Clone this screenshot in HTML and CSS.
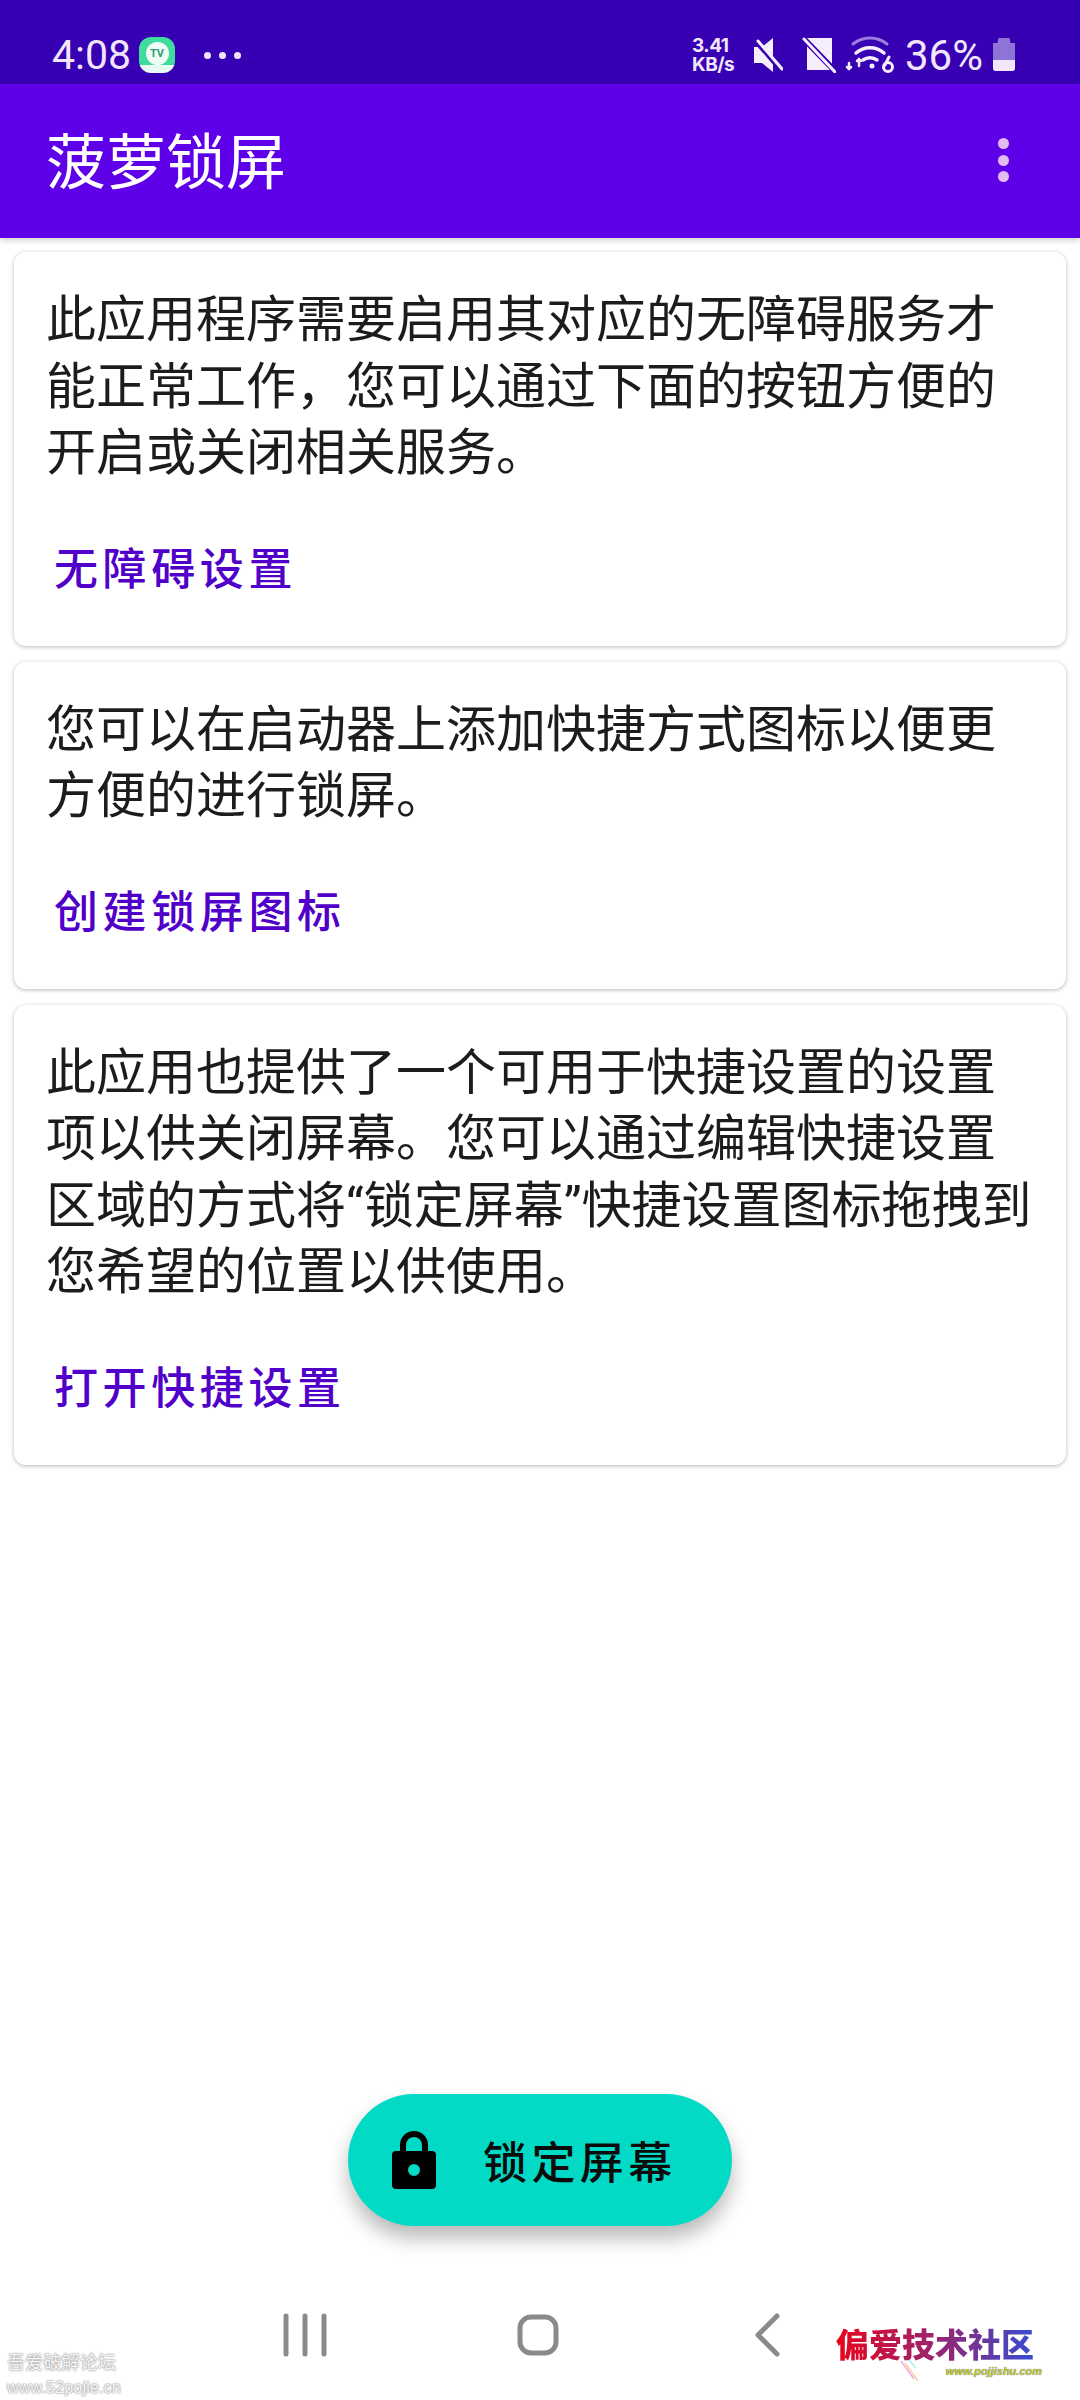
FILE: index.html
```html
<!DOCTYPE html>
<html lang="zh-CN">
<head>
  <meta charset="UTF-8">
  <meta name="viewport" content="width=device-width, initial-scale=1.0">
  <title>菠萝锁屏</title>
  <link rel="stylesheet" href="styles.css">
</head>
<body>
  <div class="page">
    <div class="status-bar">
      <div class="status-left">
        <span class="clock">4:08</span>
        <span class="tv-icon"><span class="tv-disc">TV</span></span>
        <span class="status-dots"><i></i><i></i><i></i></span>
      </div>
      <div class="status-right">
        <span class="net-speed">3.41<br>KB/s</span>
        <svg class="ico-mute" width="30" height="36" viewBox="0 0 30 36">
          <path fill="#f6eefc" d="M1 10h8l11-9v34L9 26H1z"/>
          <path stroke="#3700b3" stroke-width="5" d="M2 3l27 31"/>
          <path stroke="#f6eefc" stroke-width="3" stroke-linecap="round" d="M5 4l24 28"/>
        </svg>
        <svg class="ico-sim" width="34" height="36" viewBox="0 0 34 36">
          <path fill="#f6eefc" d="M5 1h25v32H5z"/>
          <path stroke="#3700b3" stroke-width="6" d="M0 0l34 35"/>
          <path stroke="#f6eefc" stroke-width="3" stroke-linecap="round" d="M2 2l31 33"/>
        </svg>
        <svg class="ico-wifi" width="50" height="38" viewBox="0 0 50 38" fill="none" stroke-linecap="round">
          <path stroke="#9a7fe0" stroke-width="3" d="M8 8c10-8 24-8 34 0"/>
          <path stroke="#f6eefc" stroke-width="3.5" d="M11 17c8-7 20-7 28 0"/>
          <path stroke="#f6eefc" stroke-width="3.5" d="M18 24c4-3 10-3 14 0"/>
          <circle cx="27" cy="30" r="2.5" fill="#f6eefc"/>
          <path stroke="#f6eefc" stroke-width="2.5" d="M4 33v-6M14 30v-7M2 31l2 2 2-2M12 25l2-2 2 2"/>
          <circle cx="43" cy="31" r="4.5" stroke="#f6eefc" stroke-width="3"/>
          <path stroke="#f6eefc" stroke-width="3" d="M40 29l4-8"/>
        </svg>
        <span class="battery-text">36%</span>
        <span class="battery"><span class="battery-level"></span></span>
      </div>
    </div>

    <header class="app-bar">
      <h1>菠萝锁屏</h1>
      <span class="menu-dots"><i></i><i></i><i></i></span>
    </header>

    <main class="cards">
      <section class="card">
        <p>此应用程序需要启用其对应的无障碍服务才<br>能正常工作，您可以通过下面的按钮方便的<br>开启或关闭相关服务。</p>
        <a class="card-action">无障碍设置</a>
      </section>
      <section class="card">
        <p>您可以在启动器上添加快捷方式图标以便更<br>方便的进行锁屏。</p>
        <a class="card-action">创建锁屏图标</a>
      </section>
      <section class="card">
        <p>此应用也提供了一个可用于快捷设置的设置<br>项以供关闭屏幕。您可以通过编辑快捷设置<br>区域的方式将<span class="quote">“</span>锁定屏幕<span class="quote">”</span>快捷设置图标拖拽到<br>您希望的位置以供使用。</p>
        <a class="card-action">打开快捷设置</a>
      </section>
    </main>

    <div class="fab-row">
      <button class="fab">
        <svg width="44" height="58" viewBox="0 0 44 58">
          <path fill="#000" fill-rule="evenodd" d="M4 20h4v-6a14 14 0 0 1 28 0v6h4a4 4 0 0 1 4 4v30a4 4 0 0 1-4 4H4a4 4 0 0 1-4-4V24a4 4 0 0 1 4-4zM14 20h16v-6a8 8 0 0 0-16 0zM22 33a6 6 0 1 0 0 12 6 6 0 0 0 0-12z"/>
        </svg>
        <span>锁定屏幕</span>
      </button>
    </div>

    <nav class="nav-bar">
      <svg class="nav-recent" width="46" height="44" viewBox="0 0 46 44">
        <path stroke="#8a8a8a" stroke-width="5" stroke-linecap="round" d="M4 3v38M23 3v38M42 3v38"/>
      </svg>
      <svg class="nav-home" width="42" height="44" viewBox="0 0 42 44">
        <rect x="3" y="4" width="36" height="36" rx="11" fill="none" stroke="#8a8a8a" stroke-width="5"/>
      </svg>
      <svg class="nav-back" width="26" height="44" viewBox="0 0 26 44">
        <path fill="none" stroke="#8a8a8a" stroke-width="5" stroke-linecap="round" stroke-linejoin="round" d="M23 3L4 22l19 19"/>
      </svg>
    </nav>

    <div class="mark-left">吾爱破解论坛<br><span>www.52pojie.cn</span></div>
    <div class="mark-right">
      <div class="mark-title">偏爱技术社区</div>
      <div class="mark-url">www.pojjishu.com</div>
      <svg class="mark-streak" width="20" height="22" viewBox="0 0 20 22" fill="none" stroke-width="1.5">
        <path stroke="#f4a8e0" d="M1 1l13 18"/>
        <path stroke="#f6d0a8" d="M5 3l13 18"/>
        <path stroke="#a8f0f0" d="M9 0l7 8"/>
      </svg>
    </div>
  </div>
</body>
</html>
```

FILE: styles.css
```css
* {
  box-sizing: border-box;
}

body {
  margin: 0;
  background: #fff;
  font-family: "Noto Sans CJK SC", "Noto Sans", sans-serif;
}

.page {
  position: relative;
  width: 1080px;
  height: 2400px;
  display: flex;
  flex-direction: column;
  background: #fff;
  overflow: hidden;
}

/* status bar */
.status-bar {
  height: 84px;
  flex: none;
  padding: 26px 65px 0 52px;
  background: #3700b3;
  color: #f1e6fb;
  display: flex;
  justify-content: space-between;
  align-items: center;
}

.status-left,
.status-right {
  display: flex;
  align-items: center;
}

.clock {
  font-family: Roboto, sans-serif;
  font-size: 41px;
  width: 87px;
}

.tv-icon {
  width: 36px;
  height: 36px;
  border-radius: 12px;
  background: linear-gradient(#3fdc9d 78%, #e8fbf2 78%);
  display: flex;
  justify-content: center;
  padding-top: 5px;
}

.tv-disc {
  width: 23px;
  height: 23px;
  border-radius: 50%;
  background: #effbf5;
  color: #2f9d72;
  font: 700 11px/23px Roboto, sans-serif;
  text-align: center;
}

.status-dots {
  display: flex;
  gap: 8px;
  margin-left: 29px;
}

.status-dots i {
  width: 7px;
  height: 7px;
  border-radius: 50%;
  background: #f1e6fb;
}

.net-speed {
  font: 700 19px/19px Inter, sans-serif;
  letter-spacing: -0.5px;
  width: 61px;
}

.ico-mute {
  margin-right: 19px;
}

.ico-sim {
  margin-right: 9px;
}

.battery-text {
  font-family: Roboto, sans-serif;
  font-size: 42px;
  margin: 0 10px;
  width: 78px;
  white-space: nowrap;
}

.battery {
  position: relative;
  width: 22px;
  height: 33px;
  margin-top: -1px;
  border-radius: 3px;
  background: #8f74d8;
  overflow: hidden;
  clip-path: polygon(0 5px, 20% 5px, 25% 0, 75% 0, 80% 5px, 100% 5px, 100% 100%, 0 100%);
}

.battery-level {
  position: absolute;
  left: 0;
  right: 0;
  bottom: 0;
  height: 11px;
  background: #f1e6fb;
}

/* app bar */
.app-bar {
  height: 154px;
  flex: none;
  padding: 0 71px 2px 46px;
  background: #5e00e8;
  display: flex;
  justify-content: space-between;
  align-items: center;
  box-shadow: 0 2px 6px rgba(0, 0, 0, 0.2);
  z-index: 1;
}

.app-bar h1 {
  margin: -6px 0 0;
  font-size: 60px;
  font-weight: 400;
  color: #fff;
}

.menu-dots {
  display: flex;
  flex-direction: column;
  gap: 5.5px;
}

.menu-dots i {
  width: 11px;
  height: 11px;
  border-radius: 50%;
  background: #e0bcf2;
}

/* cards */
.cards {
  flex: 1;
  padding: 14px 14px 0;
  display: flex;
  flex-direction: column;
  gap: 16px;
  background: #fff;
}

.card {
  padding: 30px 32px 0;
  background: #fff;
  border-radius: 12px;
  box-shadow: 0 1px 4px rgba(0, 0, 0, 0.28);
}

.card p {
  margin: 0;
  font-size: 50px;
  line-height: 66.5px;
  color: #1c1c1c;
  white-space: nowrap;
}

.quote {
  font-family: Roboto, sans-serif;
  line-height: 1;
}

.card-action {
  display: block;
  height: 164px;
  padding: 51px 0 0 8px;
  font-size: 44px;
  font-weight: 500;
  line-height: 66px;
  letter-spacing: 4.6px;
  color: #5000c8;
}

/* lock button */
.fab-row {
  flex: none;
  display: flex;
  justify-content: center;
  padding-bottom: 64px;
}

.fab {
  width: 384px;
  height: 132px;
  padding: 0 0 0 44px;
  border: none;
  border-radius: 66px;
  background: #03dac5;
  color: #0b0b0b;
  box-shadow: 0 12px 20px rgba(0, 0, 0, 0.28);
  display: flex;
  align-items: center;
  font-family: inherit;
}

.fab span {
  margin-left: 47px;
  font-size: 44px;
  font-weight: 500;
  letter-spacing: 4.4px;
}

/* navigation bar */
.nav-bar {
  height: 110px;
  flex: none;
  padding-top: 23px;
  display: flex;
  align-items: flex-start;
}

.nav-recent {
  margin-left: 282px;
}

.nav-home {
  margin-left: 189px;
}

.nav-back {
  margin-left: 195px;
}

/* watermarks over the screenshot */
.mark-left {
  position: absolute;
  left: 7px;
  top: 2349px;
  font-size: 18px;
  line-height: 24px;
  letter-spacing: 0.2px;
  color: #f5f5f5;
  text-shadow: 0 0 2px #999, 0 0 2px #999;
}

.mark-left span {
  font-family: "Liberation Sans", sans-serif;
  font-size: 16px;
}

.mark-right {
  position: absolute;
  left: 836px;
  top: 2322px;
  width: 206px;
}

.mark-title {
  font-size: 33px;
  line-height: 42px;
  font-weight: 900;
  white-space: nowrap;
  background: linear-gradient(90deg, #e8041c, #a0226a 45%, #2f4fd8);
  -webkit-background-clip: text;
  background-clip: text;
  color: transparent;
}

.mark-url {
  font: italic 700 11px/14px "Liberation Sans", sans-serif;
  text-align: right;
  color: #c9c820;
  text-shadow: 0 0 1px #3a4fb0;
}

.mark-streak {
  position: absolute;
  left: 64px;
  top: 38px;
}
```
